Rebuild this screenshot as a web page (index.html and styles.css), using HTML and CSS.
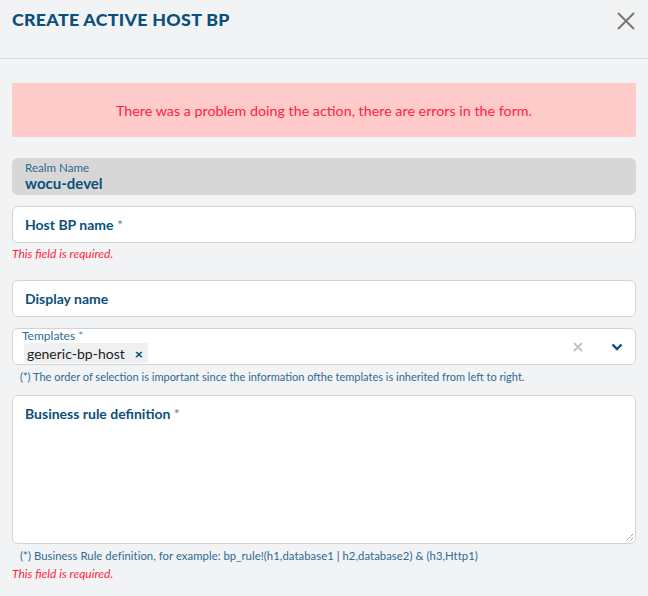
FILE: index.html
```html
<!DOCTYPE html>
<html>
<head>
<meta charset="utf-8">
<link rel="stylesheet" href="styles.css">
</head>
<body>
<div class="modal">
  <header class="modal-header">
    <h1 class="title">CREATE ACTIVE HOST BP</h1>
    <button class="close" aria-label="Close">
      <svg width="18" height="18" viewBox="0 0 18 18"><path d="M1 1 L17 17 M17 1 L1 17" stroke="#777" stroke-width="2" fill="none"/></svg>
    </button>
  </header>
  <form class="form">
    <div class="alert">There was a problem doing the action, there are errors in the form.</div>

    <div class="readonly">
      <div class="ro-label">Realm Name</div>
      <div class="ro-value">wocu-devel</div>
    </div>

    <div class="field">
      <div class="input"><span class="ph">Host BP name <span class="star">*</span></span></div>
      <div class="err">This field is required.</div>
    </div>

    <div class="field">
      <div class="input"><span class="ph">Display name</span></div>
    </div>

    <div class="field">
      <div class="select">
        <div class="sel-main">
          <div class="sel-label">Templates <span class="star">*</span></div>
          <div class="chip">generic-bp-host <span class="chip-x">×</span></div>
        </div>
        <div class="sel-icons">
          <svg class="clear" width="10" height="10" viewBox="0 0 10 10"><path d="M1 1 L9 9 M9 1 L1 9" stroke="#c4c4c4" stroke-width="2" fill="none"/></svg>
          <svg class="chev" width="12" height="8" viewBox="0 0 12 8"><path d="M1.5 1.5 L6 6 L10.5 1.5" stroke="#0b4f7c" stroke-width="2.4" fill="none"/></svg>
        </div>
      </div>
      <div class="help">(*) The order of selection is important since the information ofthe templates is inherited from left to right.</div>
    </div>

    <div class="field">
      <div class="textarea"><span class="ph">Business rule definition <span class="star">*</span></span>
        <svg class="grip" width="9" height="9" viewBox="0 0 9 9"><path d="M8 1 L1 8 M8 5 L5 8" stroke="#666" stroke-width="1" stroke-dasharray="1 1" fill="none"/></svg>
      </div>
      <div class="help help-wide">(*) Business Rule definition, for example: bp_rule!(h1,database1 | h2,database2) &amp; (h3,Http1)</div>
      <div class="err">This field is required.</div>
    </div>
  </form>
</div>
</body>
</html>
```

FILE: styles.css
```css
* { box-sizing: border-box; }
html, body { margin: 0; padding: 0; }
body {
  background: #f2f3f5;
  font-family: Lato, "Liberation Sans", sans-serif;
  color: #0b4f7c;
}
.modal { width: 648px; height: 596px; overflow: hidden; }
.modal-header {
  height: 59px;
  border-bottom: 1px solid #d7d9dc;
  display: flex;
  justify-content: space-between;
  align-items: flex-start;
  padding: 8px 12px 0 12px;
}
.title {
  margin: 0;
  font-size: 17.8px;
  font-weight: 900;
  letter-spacing: 0.3px;
  color: #0b4f7c;
  line-height: 22px;
}
.close {
  border: 0;
  background: none;
  padding: 0;
  margin: 4px 1px 0 0;
  width: 18px;
  height: 18px;
  cursor: pointer;
}
.form { padding: 24px 12px 0 12px; }
.alert {
  height: 54px;
  background: #ffcaca;
  color: #ff1f3f;
  font-size: 14.3px;
  display: flex;
  align-items: center;
  justify-content: center;
  margin-bottom: 21px;
}
.readonly {
  background: #d8d7d7;
  border-radius: 6px;
  height: 37px;
  padding: 3px 13px;
  margin-bottom: 11px;
}
.ro-label { font-size: 11.6px; line-height: 14px; color: #2d6a93; }
.ro-value { font-size: 15px; font-weight: 700; line-height: 17px; }
.field { margin-bottom: 11px; }
.input {
  height: 37px;
  background: #fff;
  border: 1px solid #d3d3d3;
  border-radius: 6px;
  display: flex;
  align-items: center;
  padding: 0 12px;
}
.ph { font-size: 14px; font-weight: 700; color: #0b4f7c; }
.star { font-weight: 400; color: #5a8aab; }
.err {
  font-size: 12px;
  font-style: italic;
  color: #ff1f3f;
  margin-top: 3px;
  line-height: 16px;
  margin-bottom: 18px;
}
.select {
  height: 37px;
  background: #fff;
  border: 1px solid #d3d3d3;
  border-radius: 6px;
  display: flex;
  justify-content: space-between;
  padding: 0 0 0 9px;
}
.sel-main { display: flex; flex-direction: column; }
.sel-label { font-size: 12px; line-height: 12px; margin-top: 1px; color: #2d6a93; }
.sel-label .star { color: #5a8aab; }
.chip {
  margin-top: 1px;
  margin-left: 2px;
  background: #eef0f2;
  border-radius: 2px;
  height: 20px;
  width: 124px;
  font-size: 14px;
  color: #222;
  display: flex;
  align-items: center;
  padding-left: 3px;
  gap: 10px;
}
.chip-x { font-weight: 900; color: #0b4f7c; font-size: 14px; }
.sel-icons { display: flex; align-items: center; gap: 0; }
.clear { margin-right: 28px; }
.chev { margin-right: 12px; }
.help {
  font-size: 11px;
  color: #2d6a93;
  margin: 5px 0 0 8px;
  line-height: 14px;
}
.help-wide { font-size: 11.3px; letter-spacing: 0.05px; }
.textarea {
  position: relative;
  height: 149px;
  background: #fff;
  border: 1px solid #d3d3d3;
  border-radius: 6px;
  padding: 7px 12px;
}
.grip { position: absolute; right: 1px; bottom: 1px; }
```
